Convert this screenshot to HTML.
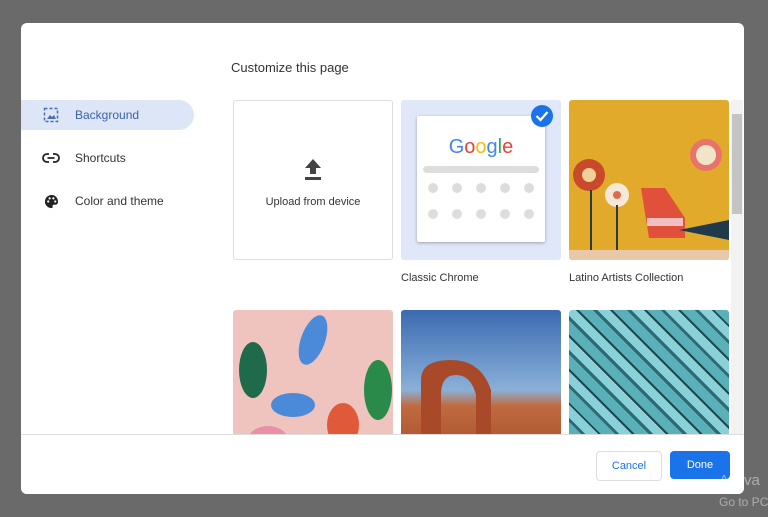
<!DOCTYPE html>
<html><head><style>
body{margin:0;width:768px;height:517px;background:#6a6a6a;font-family:"Liberation Sans",sans-serif;position:relative;overflow:hidden}
.dlg{position:absolute;left:21px;top:23px;width:723px;height:471px;background:#fff;border-radius:6px;overflow:hidden}
.t{position:absolute;left:210px;top:37px;font-size:13px;color:#333}
.nav{position:absolute;left:0;height:30px;font-size:12px;color:#333;display:flex;align-items:center;white-space:nowrap;width:180px}
.nav span{position:absolute;left:54px;white-space:nowrap}
.sel{background:#dde6f6;width:173px;border-radius:0 15px 15px 0;color:#3c62a8}
.tile{position:absolute;width:160px;height:160px;border-radius:3px;overflow:hidden}
.cap{position:absolute;font-size:11px;color:#333;white-space:nowrap}
.foot{position:absolute;left:0;top:411px;width:723px;border-top:1px solid #ddd;height:60px}
.btn{position:absolute;top:428px;height:28px;border-radius:4px;font-size:11px;display:flex;align-items:center;justify-content:center}
.dot{position:absolute;width:10px;height:10px;border-radius:50%;background:#ddd}
</style></head><body>
<div class="dlg">
<div class="t">Customize this page</div>
<div class="nav sel" style="top:77px;width:173px"><svg style="position:absolute;left:22px" width="16" height="16" viewBox="0 0 16 16"><rect x="1.5" y="1.5" width="13" height="13" fill="none" stroke="#4a6fb0" stroke-width="1.5" stroke-dasharray="3 2"/><path d="M4 12l3-4 2 2 2-2 2 4z" fill="#4a6fb0"/></svg><span>Background</span></div>
<div class="nav" style="top:120px"><svg style="position:absolute;left:21px" width="18" height="10" viewBox="0 0 18 10"><path d="M7 1H5a4 4 0 000 8h2M11 1h2a4 4 0 010 8h-2M5.5 5h7" fill="none" stroke="#222" stroke-width="1.8"/></svg><span>Shortcuts</span></div>
<div class="nav" style="top:163px"><svg style="position:absolute;left:23px" width="15" height="15" viewBox="0 0 16 16"><path d="M8 1a7 7 0 000 14c1 0 1.5-.7 1.2-1.5-.4-1 .2-2 1.3-2H12a3 3 0 003-3C15 4 12 1 8 1z" fill="#222"/><circle cx="4.5" cy="8" r="1.2" fill="#fff"/><circle cx="6" cy="4.6" r="1.2" fill="#fff"/><circle cx="10" cy="4.6" r="1.2" fill="#fff"/><circle cx="12" cy="8" r="1.2" fill="#fff"/></svg><span>Color and theme</span></div>

<div class="tile" style="left:212px;top:77px;border:1px solid #ddd;width:158px;height:158px"><svg style="position:absolute;left:70px;top:58px" width="18" height="22" viewBox="0 0 18 22"><path d="M9 0L1 9h5v6h6V9h5z M1 18h16v3H1z" fill="#444"/></svg><div style="position:absolute;top:95px;width:100%;text-align:center;font-size:11px;color:#333">Upload from device</div></div>

<div class="tile" style="left:380px;top:77px;background:#dfe7f8">
<div style="position:absolute;left:16px;top:16px;width:128px;height:126px;background:#fff;box-shadow:0 1px 3px rgba(0,0,0,.3);border-radius:2px">
<div style="position:absolute;top:20px;width:100%;text-align:center;font-size:20px;font-family:'Liberation Sans',sans-serif"><span style="color:#4285f4">G</span><span style="color:#ea4335">o</span><span style="color:#fbbc05">o</span><span style="color:#4285f4">g</span><span style="color:#34a853">l</span><span style="color:#ea4335">e</span></div>
<div style="position:absolute;left:6px;top:50px;width:116px;height:7px;border-radius:4px;background:#ddd"></div>
<div class="dot" style="left:11px;top:67px"></div><div class="dot" style="left:35px;top:67px"></div><div class="dot" style="left:59px;top:67px"></div><div class="dot" style="left:83px;top:67px"></div><div class="dot" style="left:107px;top:67px"></div>
<div class="dot" style="left:11px;top:93px"></div><div class="dot" style="left:35px;top:93px"></div><div class="dot" style="left:59px;top:93px"></div><div class="dot" style="left:83px;top:93px"></div><div class="dot" style="left:107px;top:93px"></div>
</div>
<svg style="position:absolute;left:130px;top:5px" width="22" height="22"><circle cx="11" cy="11" r="11" fill="#1a73e8"/><path d="M5.5 11l4 4 7-8" fill="none" stroke="#fff" stroke-width="2.2"/></svg>
</div>
<div class="cap" style="left:380px;top:249px">Classic Chrome</div>

<div class="tile" style="left:548px;top:77px;background:#e1aa2a">
<svg width="160" height="160"><circle cx="137" cy="55" r="16" fill="#e8736a"/><circle cx="137" cy="55" r="10" fill="#f2e4c6"/><circle cx="20" cy="75" r="16" fill="#c84a2a"/><circle cx="20" cy="75" r="7" fill="#f2d09a"/><circle cx="48" cy="95" r="12" fill="#f4e8d8"/><circle cx="48" cy="95" r="4" fill="#e06a50"/><path d="M22 90v60M48 105v45" stroke="#2a3a4a" stroke-width="2"/><path d="M72 88h24l20 30v20H80z" fill="#e0503a"/><path d="M78 118h36v8H78z" fill="#f2c0c0"/><path d="M110 130l50-10v20z" fill="#1f3a4a"/><rect x="0" y="150" width="160" height="10" fill="#e8c8a8"/></svg></div>
<div class="cap" style="left:548px;top:249px">Latino Artists Collection</div>

<div class="tile" style="left:212px;top:287px;background:#f0c4be"><svg width="160" height="160"><ellipse cx="20" cy="60" rx="14" ry="28" fill="#1f6a4a"/><ellipse cx="80" cy="30" rx="12" ry="26" fill="#4a8ad8" transform="rotate(20 80 30)"/><ellipse cx="60" cy="95" rx="22" ry="12" fill="#4a8ad8"/><ellipse cx="110" cy="115" rx="16" ry="22" fill="#e05a3a"/><ellipse cx="145" cy="80" rx="14" ry="30" fill="#2a8a4a"/><ellipse cx="35" cy="130" rx="20" ry="14" fill="#e890a8"/></svg></div>
<div class="tile" style="left:380px;top:287px;background:linear-gradient(#3a6ab0,#8ab0d8 50%,#c06a40 60%,#a04a2a)"><svg width="160" height="160"><path d="M20 140V70q0-20 30-20t40 30v60h-15V85q-5-20-20-20t-15 20v55z" fill="#a84a2a"/></svg></div>
<div class="tile" style="left:548px;top:287px;background:repeating-linear-gradient(45deg,#5ab0b8 0 10px,#2a6a70 10px 13px,#8ad0d8 13px 22px,#1a4a50 22px 24px)"></div>

<div style="position:absolute;left:710px;top:77px;width:12px;height:334px;background:#f2f2f2"><div style="position:absolute;left:1px;top:14px;width:10px;height:100px;background:#c4c4c4"></div></div>

<div class="foot" style="background:#fff"></div>
<div class="btn" style="left:575px;width:64px;border:1px solid #ddd;color:#1a73e8">Cancel</div>
<div class="btn" style="left:649px;width:60px;background:#1a73e8;color:#fff">Done</div>
</div>
<div style="position:absolute;left:719px;top:472px;font-size:15px;color:rgba(255,255,255,.45);white-space:nowrap">Activa</div>
<div style="position:absolute;left:719px;top:495px;font-size:12px;color:rgba(255,255,255,.45);white-space:nowrap">Go to PC</div>
</body></html>
